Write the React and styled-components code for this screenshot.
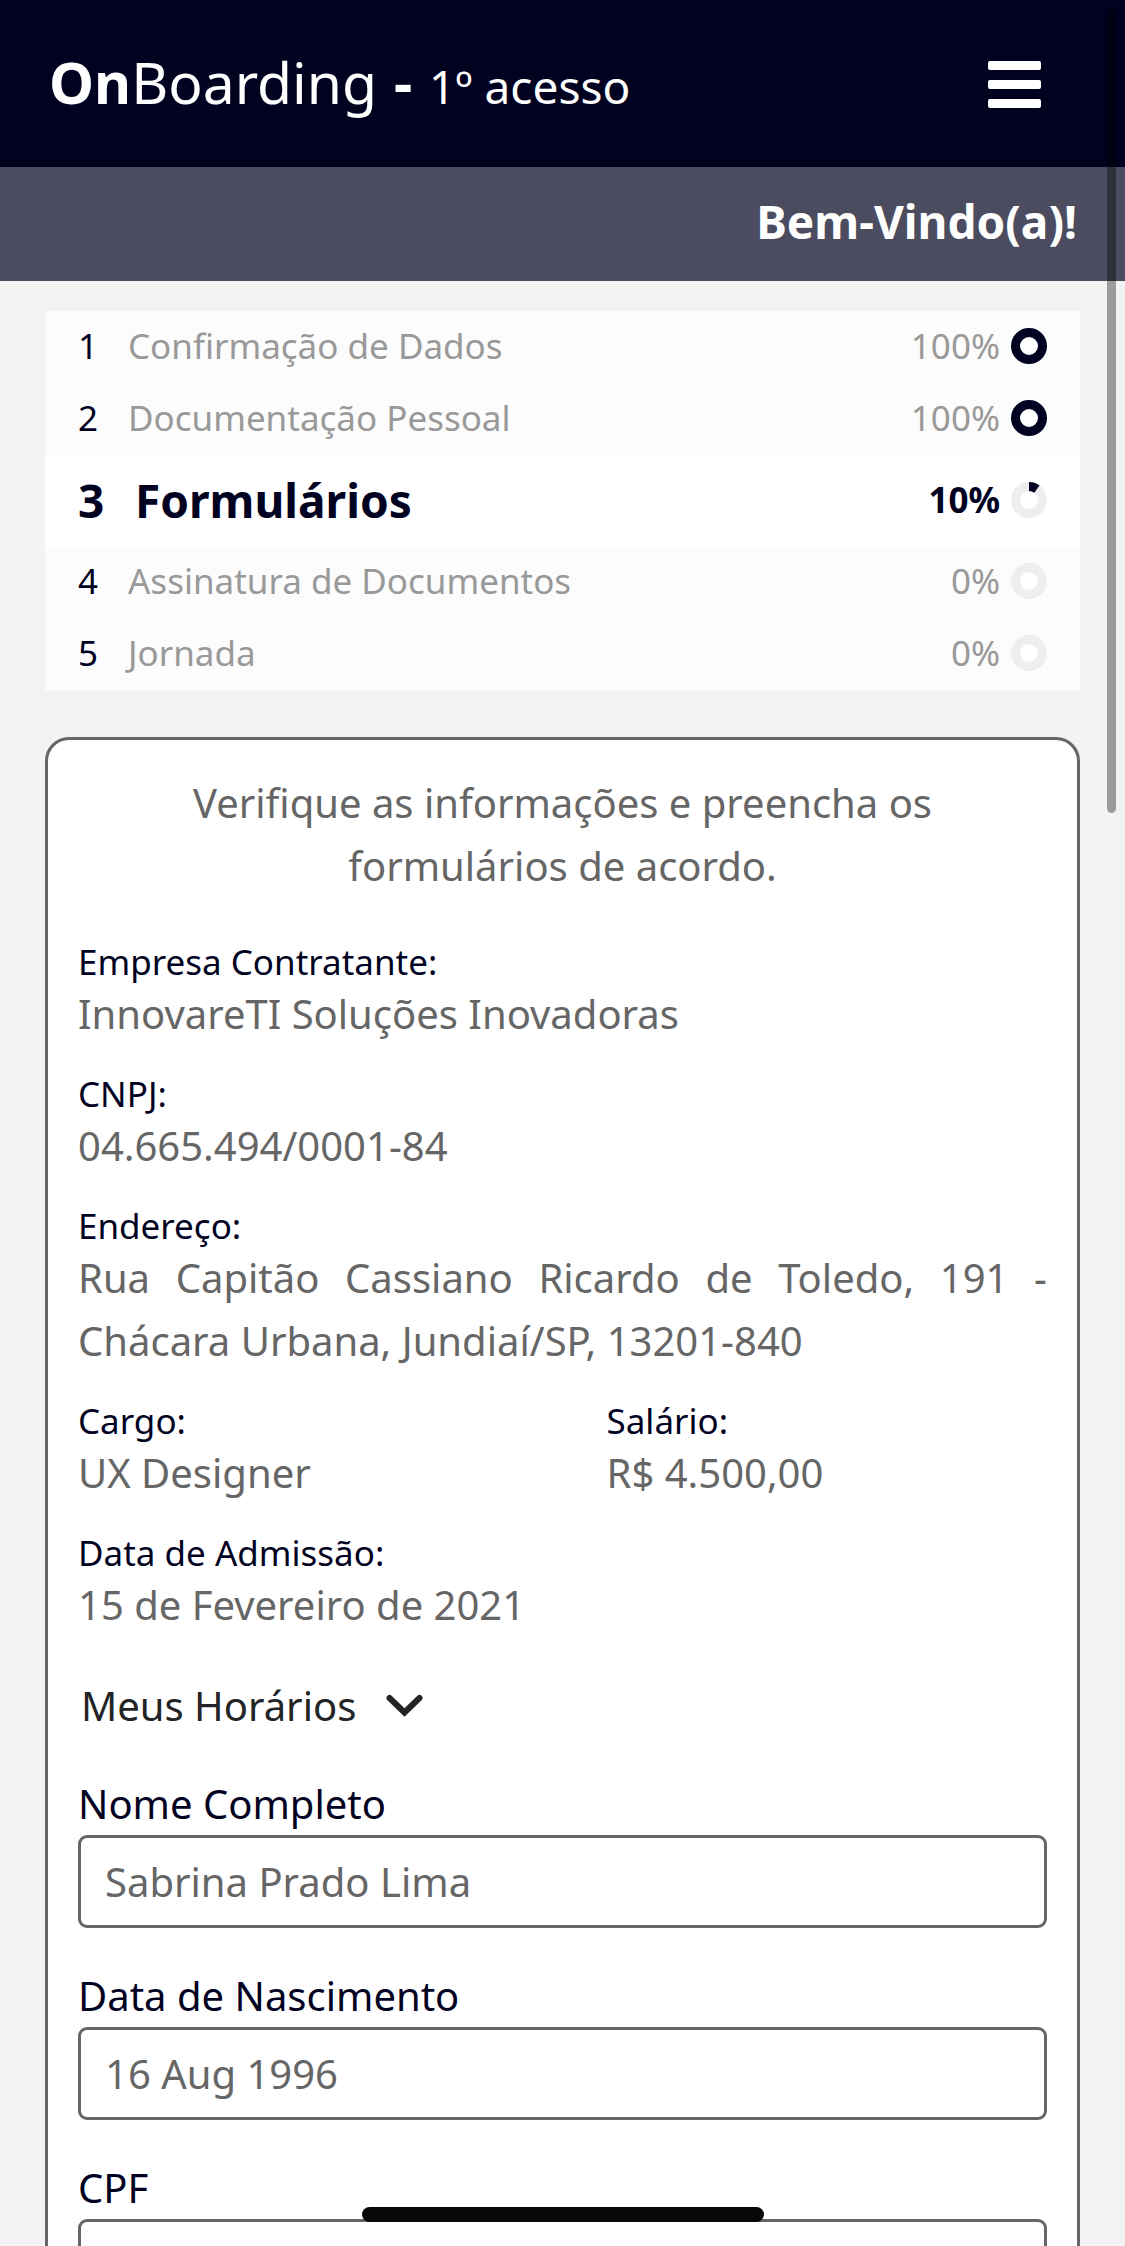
import React, { useState } from "react";
import styled, { createGlobalStyle, css } from "styled-components";

const color = {
  navy: "#01021f",
  slate: "#4b4c5f",
  page: "#f3f3f3",
  row: "#fcfcfc",
  track: "#eeeeee",
  muted: "#999999",
  text: "#666666",
  dark: "#222426",
};

const GlobalStyle = createGlobalStyle`
  *, *::before, *::after { box-sizing: border-box; }
  html, body, #root { height: 100%; }
  body {
    margin: 0;
    background: ${color.page};
    color: ${color.text};
    font-family: "Noto Sans", "Open Sans", sans-serif;
    font-size: 40px;
    line-height: 63px;
  }
`;

const Page = styled.div`
  height: 100vh;
  overflow-y: auto;
  scrollbar-width: none;
`;

const Header = styled.header`
  display: flex;
  align-items: center;
  justify-content: space-between;
  height: 167px;
  padding: 1px 84px 0 49px;
  background: ${color.navy};
  color: #fff;
`;

const Brand = styled.h1`
  margin: 0;
  font-size: 57px;
  font-weight: 400;
  line-height: 78px;
  white-space: nowrap;
`;

const BrandDash = styled.b`
  margin: 0 2px;
`;

const BrandNote = styled.small`
  font-size: 46px;
`;

const MenuButton = styled.button`
  display: flex;
  padding: 0;
  border: 0;
  background: none;
  color: inherit;
  cursor: pointer;
`;

const Welcome = styled.p`
  margin: 0;
  padding: 23px 48px 28px;
  background: ${color.slate};
  color: #fff;
  font-size: 46px;
  font-weight: 700;
  text-align: right;
`;

const Content = styled.main`
  display: flex;
  flex-direction: column;
  gap: 47px;
  padding: 30px 45px 48px;
`;

const Steps = styled.ol`
  margin: 0;
  padding: 0;
  list-style: none;
`;

const Step = styled.li`
  display: flex;
  align-items: center;
  height: 72px;
  padding: 0 33px 2px;
  background: ${color.row};
  color: ${color.muted};
  font-size: 35px;
  line-height: 60px;

  ${({ $current }) =>
    $current &&
    css`
      height: 91px;
      background: #fff;
      color: ${color.navy};
      font-weight: 700;
    `}
`;

const StepNumber = styled.span`
  width: ${({ $current }) => ($current ? 57 : 50)}px;
  color: ${color.navy};
  font-size: ${({ $current }) => ($current ? 46 : 35)}px;
`;

const StepName = styled.span`
  flex: 1;
  font-size: ${({ $current }) => ($current ? 46 : 35)}px;
`;

const Ring = styled.svg`
  width: 36px;
  height: 36px;
  margin-left: 11px;
`;

const Card = styled.section`
  padding: 31px 30px;
  border: 3px solid ${color.text};
  border-radius: 24px;
  background: #fff;
`;

const Intro = styled.p`
  margin: 0 auto 45px;
  padding: 0 96px;
  text-align: center;
`;

const Details = styled.dl`
  display: grid;
  grid-template-columns: 1fr 1fr;
  column-gap: 88px;
  row-gap: 29px;
  margin: 0;
`;

const Detail = styled.div`
  grid-column: ${({ $half }) => ($half ? "auto" : "1 / -1")};
`;

const Term = styled.dt`
  color: ${color.navy};
  font-size: 35px;
  line-height: 40px;
`;

const Value = styled.dd`
  margin: 0;
  text-align: justify;
`;

const Toggle = styled.button`
  display: flex;
  align-items: center;
  gap: 30px;
  margin: 38px 0 43px;
  padding: 0 3px;
  border: 0;
  background: none;
  color: ${color.dark};
  font: inherit;
  cursor: pointer;
`;

const Fields = styled.form`
  display: flex;
  flex-direction: column;
  gap: 44px;
`;

const Field = styled.div`
  display: flex;
  flex-direction: column;
  gap: 7px;
`;

const Label = styled.label`
  color: ${color.navy};
  line-height: 48px;
`;

const Input = styled.input`
  width: 100%;
  height: 93px;
  padding: 0 24px;
  border: 3px solid ${color.text};
  border-radius: 9px;
  background: #fff;
  color: ${color.text};
  font: inherit;
`;

const ScrollThumb = styled.div`
  position: fixed;
  top: 9px;
  right: 9px;
  width: 9px;
  height: 804px;
  border-radius: 5px;
  background: rgba(0, 0, 0, 0.36);
`;

const HomeIndicator = styled.div`
  position: fixed;
  bottom: 24px;
  left: 50%;
  width: 402px;
  height: 15px;
  margin-left: -201px;
  border-radius: 8px;
  background: #080808;
`;

const steps = [
  { name: "Confirmação de Dados", progress: 100 },
  { name: "Documentação Pessoal", progress: 100 },
  { name: "Formulários", progress: 10, current: true },
  { name: "Assinatura de Documentos", progress: 0 },
  { name: "Jornada", progress: 0 },
];

const details = [
  { term: "Empresa Contratante:", value: "InnovareTI Soluções Inovadoras" },
  { term: "CNPJ:", value: "04.665.494/0001-84" },
  {
    term: "Endereço:",
    value: "Rua Capitão Cassiano Ricardo de Toledo, 191 - Chácara Urbana, Jundiaí/SP, 13201-840",
  },
  { term: "Cargo:", value: "UX Designer", half: true },
  { term: "Salário:", value: "R$ 4.500,00", half: true },
  { term: "Data de Admissão:", value: "15 de Fevereiro de 2021" },
];

const fields = [
  { id: "nome", label: "Nome Completo", value: "Sabrina Prado Lima" },
  { id: "nascimento", label: "Data de Nascimento", value: "16 Aug 1996" },
  { id: "cpf", label: "CPF", value: "" },
];

function ProgressRing({ value }) {
  return (
    <Ring viewBox="0 0 36 36" aria-hidden="true">
      <circle cx="18" cy="18" r="13.5" fill="#fff" stroke={color.track} strokeWidth="9" />
      {value > 0 && (
        <circle
          cx="18"
          cy="18"
          r="13.5"
          fill="none"
          stroke={color.navy}
          strokeWidth="9"
          pathLength="100"
          strokeDasharray={`${value} ${100 - value}`}
          transform="rotate(-90 18 18)"
        />
      )}
    </Ring>
  );
}

function MenuIcon() {
  return (
    <svg width="53" height="47" viewBox="0 0 53 47" fill="currentColor" aria-hidden="true">
      <rect width="53" height="9" rx="2" />
      <rect y="19" width="53" height="9" rx="2" />
      <rect y="38" width="53" height="9" rx="2" />
    </svg>
  );
}

function ChevronIcon() {
  return (
    <svg width="37" height="23" viewBox="0 0 37 23" fill="none" aria-hidden="true">
      <path d="M3.5 4 L18.5 18.5 L33.5 4" stroke="currentColor" strokeWidth="6" strokeLinecap="round" />
    </svg>
  );
}

export default function App() {
  const [open, setOpen] = useState(false);

  return (
    <>
      <GlobalStyle />
      <Page>
        <Header>
          <Brand>
            <b>On</b>Boarding <BrandDash>-</BrandDash> <BrandNote>1º acesso</BrandNote>
          </Brand>
          <MenuButton type="button" aria-label="Menu">
            <MenuIcon />
          </MenuButton>
        </Header>
        <Welcome>Bem-Vindo(a)!</Welcome>
        <Content>
          <Steps>
            {steps.map(({ name, progress, current }, index) => (
              <Step key={name} $current={current} aria-current={current ? "step" : undefined}>
                <StepNumber $current={current}>{index + 1}</StepNumber>
                <StepName $current={current}>{name}</StepName>
                <span>{progress}%</span>
                <ProgressRing value={progress} />
              </Step>
            ))}
          </Steps>
          <Card>
            <Intro>Verifique as informações e preencha os formulários de acordo.</Intro>
            <Details>
              {details.map(({ term, value, half }) => (
                <Detail key={term} $half={half}>
                  <Term>{term}</Term>
                  <Value>{value}</Value>
                </Detail>
              ))}
            </Details>
            <Toggle type="button" aria-expanded={open} onClick={() => setOpen(!open)}>
              Meus Horários
              <ChevronIcon />
            </Toggle>
            <Fields>
              {fields.map(({ id, label, value }) => (
                <Field key={id}>
                  <Label htmlFor={id}>{label}</Label>
                  <Input id={id} type="text" defaultValue={value} />
                </Field>
              ))}
            </Fields>
          </Card>
        </Content>
      </Page>
      <ScrollThumb />
      <HomeIndicator />
    </>
  );
}
